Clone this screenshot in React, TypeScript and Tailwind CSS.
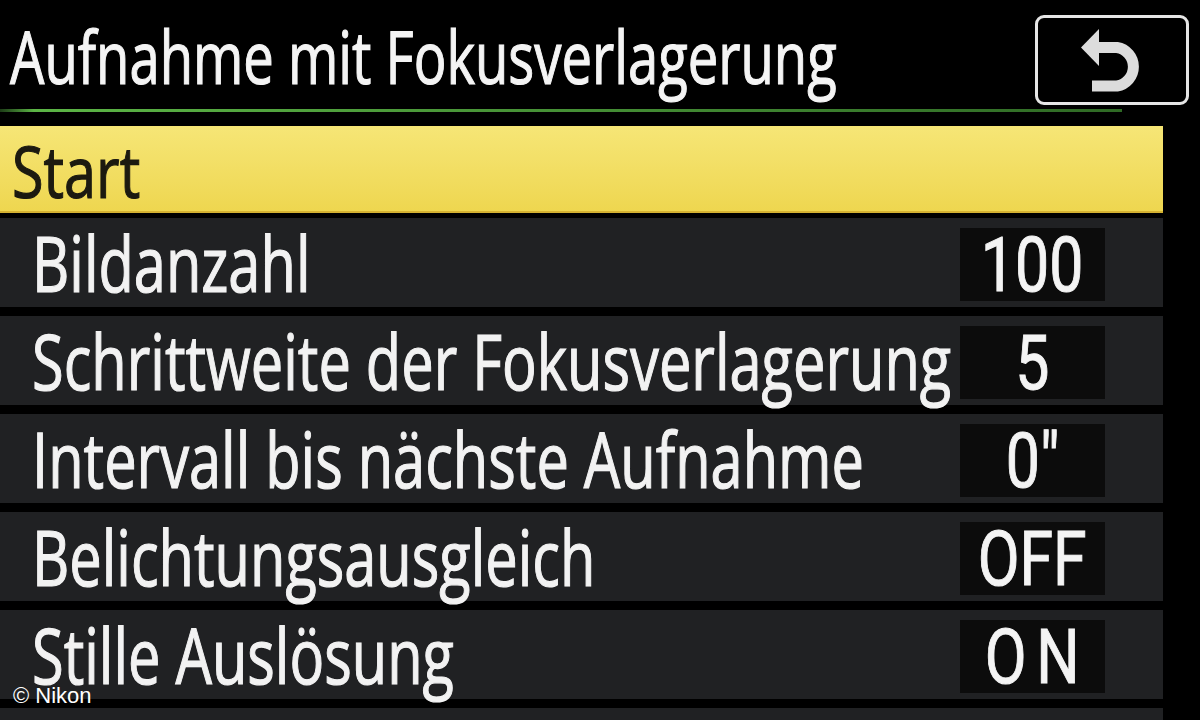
import type { ReactNode } from "react";

const rows = [
  { label: "Bildanzahl", value: "100" },
  { label: "Schrittweite der Fokusverlagerung", value: "5" },
  { label: "Intervall bis nächste Aufnahme", value: "0″" },
  { label: "Belichtungsausgleich", value: "OFF" },
  { label: "Stille Auslösung", value: "ON", wide: true },
];

const menuFont = { fontFamily: '"Open Sans", "Noto Sans", sans-serif' };
const valueFont = { fontFamily: 'Roboto, "Liberation Sans", sans-serif' };

function BackIcon() {
  return (
    <svg width="62" height="63" viewBox="0 0 62 63" fill="none">
      <path d="M16 18.5 H36 A19.5 19.5 0 0 1 36 57 H11" stroke="#dcdcdc" strokeWidth="11" />
      <polygon points="0,18.5 18,0 18,37" fill="#dcdcdc" />
    </svg>
  );
}

// labels are drawn narrowed; the wrapper keeps them from pushing the value box
function Label({ children }: { children: ReactNode }) {
  return (
    <div className="min-w-0 flex-1">
      <span
        className="block origin-left scale-x-[0.75] whitespace-nowrap text-[77px] leading-none text-[#f2f2f2] [-webkit-text-stroke:1.2px_#f2f2f2]"
        style={menuFont}
      >
        {children}
      </span>
    </div>
  );
}

function MenuRow({ label, value, wide }: { label: string; value: string; wide?: boolean }) {
  return (
    <div className="flex h-[89px] items-center bg-[#202123] pl-[32px] pr-[58px]">
      <Label>{label}</Label>
      <div className="mt-[4px] flex h-[73px] w-[145px] shrink-0 items-center justify-center bg-[#0c0c0c]">
        <span
          className={`inline-block scale-x-[0.8] text-[76px] leading-none text-[#f4f4f4] [-webkit-text-stroke:1px_#f4f4f4] ${
            wide ? "pl-[12px] tracking-[12px]" : ""
          }`}
          style={valueFont}
        >
          {value}
        </span>
      </div>
    </div>
  );
}

export default function App() {
  return (
    <div className="relative h-[720px] w-[1200px] overflow-hidden bg-black">
      <header className="flex h-[109px] items-start pl-[10px] pr-[11px]">
        <div className="min-w-0 flex-1">
          <h1
            className="mt-[19px] origin-left scale-x-[0.735] whitespace-nowrap text-[74px] font-normal leading-none text-[#f4f4f4] [-webkit-text-stroke:1.2px_#f4f4f4]"
            style={menuFont}
          >
            Aufnahme mit Fokusverlagerung
          </h1>
        </div>
        <button className="mt-[15px] flex h-[90px] w-[154px] shrink-0 items-center justify-center rounded-[9px] border-[3px] border-[#e6e6e6] bg-black">
          <BackIcon />
        </button>
      </header>

      <div className="h-[3px] w-[1122px] bg-gradient-to-r from-[#1d3d17] via-[#5cb546] via-[3%] to-[#2f6a25]" />

      <div className="mt-[14px] flex w-[1163px] flex-col">
        <div className="mb-[5px] flex h-[87px] items-center bg-gradient-to-b from-[#f6e676] to-[#eed64e] pl-[12px] shadow-[inset_0_-2px_0_#d5b232]">
          <span
            className="block origin-left scale-x-[0.8] text-[72px] leading-none text-[#1c1a10] [-webkit-text-stroke:1.2px_#1c1a10]"
            style={menuFont}
          >
            Start
          </span>
        </div>
        <div className="flex flex-col gap-[9px]">
          {rows.map((r) => (
            <MenuRow key={r.label} label={r.label} value={r.value} wide={r.wide} />
          ))}
          <div className="h-[89px] bg-[#202123]" />
        </div>
      </div>

      <span
        className="absolute left-[13px] top-[685px] text-[22px] leading-none text-white"
        style={{ fontFamily: '"Liberation Sans", Arial, sans-serif' }}
      >
        © Nikon
      </span>
    </div>
  );
}
